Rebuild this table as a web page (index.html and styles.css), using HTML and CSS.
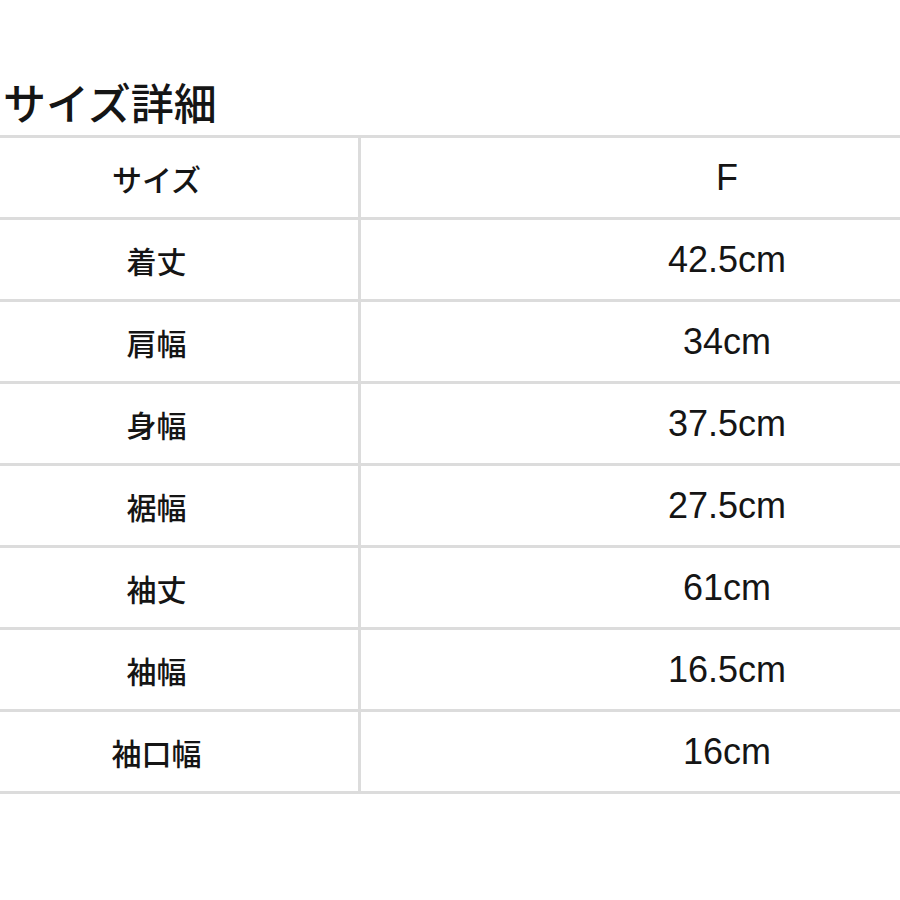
FILE: index.html
```html
<!DOCTYPE html>
<html lang="ja">
<head>
<meta charset="utf-8">
<title>サイズ詳細</title>
<link rel="stylesheet" href="styles.css">
</head>
<body>
<h1 class="title">サイズ詳細</h1>
<div class="table">
  <div class="row"><div class="label">サイズ</div><div class="value">F</div></div>
  <div class="row"><div class="label">着丈</div><div class="value">42.5cm</div></div>
  <div class="row"><div class="label">肩幅</div><div class="value">34cm</div></div>
  <div class="row"><div class="label">身幅</div><div class="value">37.5cm</div></div>
  <div class="row"><div class="label">裾幅</div><div class="value">27.5cm</div></div>
  <div class="row"><div class="label">袖丈</div><div class="value">61cm</div></div>
  <div class="row"><div class="label">袖幅</div><div class="value">16.5cm</div></div>
  <div class="row"><div class="label">袖口幅</div><div class="value">16cm</div></div>
</div>
</body>
</html>
```

FILE: styles.css
```css
html, body {
  margin: 0;
  padding: 0;
  background: #fff;
}
body {
  width: 900px;
  height: 900px;
  overflow: hidden;
  color: #151515;
  font-family: "Noto Sans CJK JP", "Liberation Sans", sans-serif;
}
.title {
  margin: 80px 0 12px 0;
  padding-left: 3px;
  font-size: 43px;
  line-height: 43px;
  font-weight: 500;
}
.table {
  width: 900px;
  border-top: 3px solid #dcdcdc;
}
.row {
  display: flex;
  height: 79px;
  border-bottom: 3px solid #dcdcdc;
}
.label {
  box-sizing: border-box;
  width: 361px;
  padding-right: 45px;
  border-right: 3px solid #dcdcdc;
  display: flex;
  align-items: center;
  justify-content: center;
  font-family: "Noto Sans CJK JP", sans-serif;
  font-size: 30px;
  font-weight: 500;
}
.value {
  flex: 1;
  padding-left: 193px;
  display: flex;
  align-items: center;
  justify-content: center;
  font-family: "Liberation Sans", "Noto Sans CJK JP", sans-serif;
  font-size: 36px;
}
```
